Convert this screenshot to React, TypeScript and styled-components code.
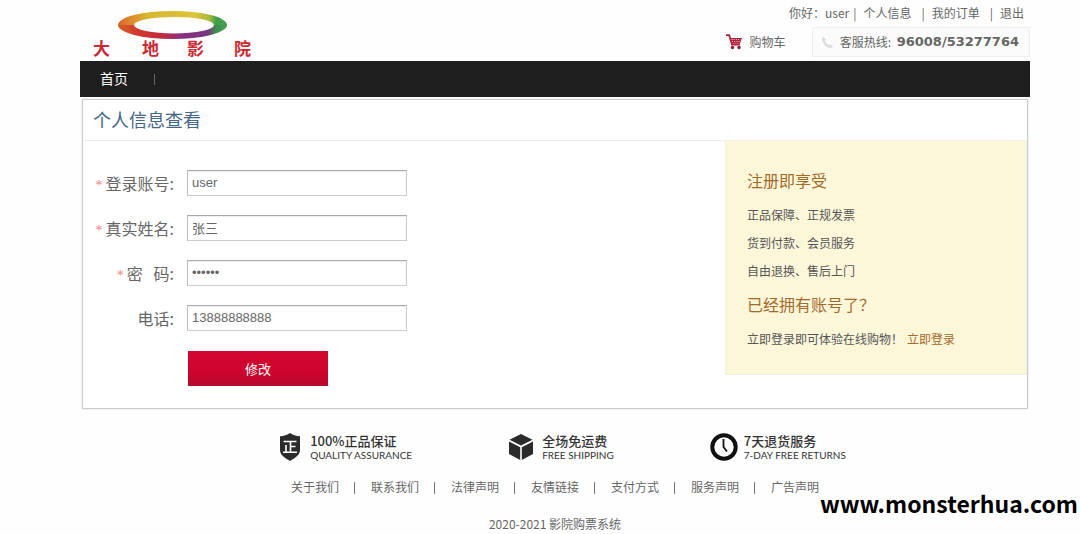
import React from "react";
import styled, { createGlobalStyle } from "styled-components";

const GlobalStyle = createGlobalStyle`
  * { box-sizing: border-box; }
  body {
    margin: 0;
    background: #fefefe;
    color: #666;
    font: 12px/20px "Noto Sans CJK SC", sans-serif;
  }
  a { color: inherit; text-decoration: none; }
  h2, p, ul { margin: 0; padding: 0; font-weight: 400; list-style: none; }
`;

const Page = styled.div`
  position: relative;
  padding: 0 50px 0 80px;
`;

const Header = styled.header`
  display: flex;
  justify-content: space-between;
  height: 61px;
`;

const HeaderSide = styled.div`
  display: flex;
  flex-direction: column;
  align-items: flex-end;
  gap: 4px;
  padding-top: 3px;
`;

const UserBar = styled.nav`
  display: flex;
  padding-right: 6px;
`;

const UserLink = styled.a`
  padding-right: 10px;
  &:last-child { padding-right: 0; }
`;

const UserName = styled.span`
  padding-right: 4px;
`;

const Bar = styled.span`
  padding-right: 7px;
`;

const Tools = styled.div`
  display: flex;
  align-items: center;
  gap: 26px;
`;

const CartLink = styled.a`
  display: flex;
  align-items: center;
  gap: 7px;
`;

const Hotline = styled.div`
  display: flex;
  align-items: center;
  height: 30px;
  padding: 0 10px 0 8px;
  border: 1px solid #eee;
  background: #fbfbfb;
  white-space: pre;

  svg { margin-right: 6px; }
  strong { margin-left: 3px; font: bold 13px/20px "DejaVu Sans", sans-serif; }
`;

const MainNav = styled.nav`
  display: flex;
  align-items: center;
  height: 36px;
  padding: 0 20px;
  background: #1e1e1e;
  color: #fff;
  font-size: 14px;
  line-height: 20px;

  a { padding-bottom: 2px; }
`;

const NavDivider = styled.span`
  width: 1px;
  height: 11px;
  margin-left: 26px;
  background: #666;
`;

const Panel = styled.main`
  margin: 2px 2px 0;
  border: 1px solid #ccc;
  box-shadow: 0 0 2px #ddd;
  background: #fff;
`;

const PanelTitle = styled.h2`
  height: 41px;
  padding-left: 10px;
  border-bottom: 1px solid #eee;
  color: #446688;
  font-size: 18px;
  line-height: 38px;
`;

const PanelBody = styled.div`
  display: flex;
  justify-content: space-between;
  align-items: flex-start;
`;

const Form = styled.form`
  display: grid;
  grid-template-columns: 102px 220px;
  row-gap: 19px;
  column-gap: 2px;
  padding: 29px 0 22px;
`;

const Label = styled.label`
  height: 26px;
  padding-right: 11px;
  font-size: 16px;
  line-height: 26px;
  text-align: right;
  white-space: pre;
`;

const Required = styled.span`
  margin-right: 3px;
  color: #f08080;
  font: 14px/20px "Liberation Serif", serif;
`;

const Field = styled.input`
  width: 220px;
  height: 26px;
  padding: 0 4px 2px;
  border: 1px solid #ccc;
  border-top-color: #aaa;
  border-left-color: #bbb;
  background: #fff;
  box-shadow: inset 0 1px 1px #eee;
  color: #666;
  font: 13px "Liberation Sans", "Noto Sans CJK SC", sans-serif;
`;

const Submit = styled.button`
  grid-column: 2;
  width: 140px;
  height: 35px;
  margin: 1px 0 0 1px;
  padding: 0;
  border: 0;
  background: linear-gradient(#d4062f, #cc052c 60%, #b50a2c);
  color: #fff;
  font: 13px "Noto Sans CJK SC", sans-serif;
`;

const Aside = styled.aside`
  width: 302px;
  padding: 19px 21px 21px;
  border: 1px solid #f2efdf;
  border-top: 0;
  background: #fdf7da;
  color: #555;
  line-height: 28px;

  a { margin-left: 4px; color: #a46a2a; }
`;

const AsideTitle = styled.h2`
  padding-bottom: 1px;
  color: #a46a2a;
  font-size: 16px;
  line-height: 40px;

  p + & {
    padding-bottom: 2px;
    line-height: 38px;
  }
`;

const Footer = styled.footer`
  text-align: center;
`;

const Services = styled.div`
  display: flex;
  justify-content: center;
  gap: 96px;
  padding: 22px 0 0 12px;
`;

const Service = styled.div`
  display: flex;
  align-items: center;
  gap: 6px;
  height: 32px;
  color: #333;
  text-align: left;
`;

const ServiceName = styled.p`
  font-size: 13px;
  line-height: 16px;
  font-weight: 500;
`;

const ServiceNote = styled.p`
  font: 10px/12px Lato, sans-serif;
`;

const FooterLinks = styled.ul`
  display: flex;
  justify-content: center;
  margin-top: 14px;

  li + li::before {
    content: "";
    display: inline-block;
    width: 1px;
    height: 12px;
    margin: 0 16px 0 15px;
    background: #777;
    vertical-align: -2px;
  }
`;

const Copyright = styled.p`
  margin-top: 17px;
`;

const Watermark = styled.div`
  position: absolute;
  right: 2px;
  bottom: 16px;
  color: #000;
  font: bold 23px/30px "Noto Sans CJK SC", sans-serif;
`;

const Logo = () => (
  <svg width="190" height="61" viewBox="0 0 190 61" role="img" aria-label="大地影院">
    <defs>
      <linearGradient id="upper" x1="38" x2="147" y1="0" y2="0" gradientUnits="userSpaceOnUse">
        <stop offset="0" stopColor="#d9642a" />
        <stop offset=".12" stopColor="#dc8a2c" />
        <stop offset=".26" stopColor="#d9b52f" />
        <stop offset=".7" stopColor="#dcc53a" />
        <stop offset=".84" stopColor="#a9b838" />
        <stop offset=".9" stopColor="#3fa04a" />
        <stop offset="1" stopColor="#45a050" />
      </linearGradient>
      <linearGradient id="lower" x1="38" x2="147" y1="0" y2="0" gradientUnits="userSpaceOnUse">
        <stop offset="0" stopColor="#d9642a" />
        <stop offset=".16" stopColor="#cf3a2c" />
        <stop offset=".4" stopColor="#c62a3c" />
        <stop offset=".58" stopColor="#8a2f80" />
        <stop offset=".82" stopColor="#7a3580" />
        <stop offset=".9" stopColor="#3f8f50" />
        <stop offset="1" stopColor="#45a050" />
      </linearGradient>
    </defs>
    <path d="M38 25A54.500 14 0 0 1 147 25H134A40 8 0 0 0 54 25Z" fill="url(#upper)" />
    <path d="M38 25A54.500 14 0 0 0 147 25H134A40 8.500 0 0 1 54 25Z" fill="url(#lower)" />
    <text
      x="13 62 107 154"
      y="55"
      fill="#cc2a33"
      fontFamily="Noto Sans CJK SC, sans-serif"
      fontSize="17"
      fontWeight="700"
    >
      大地影院
    </text>
  </svg>
);

const CartIcon = () => (
  <svg width="17" height="16" viewBox="0 0 17 16">
    <path d="M0 1.200H3.200L6 10.500H14" fill="none" stroke="#b3203a" strokeWidth="1.800" />
    <path d="M4 4H16L14 9.500H5.800Z" fill="#b3203a" />
    <path d="M5.500 5.500H14.500M6 7.500H14" stroke="#fff" strokeWidth=".8" strokeDasharray="1 1.200" />
    <circle cx="6.500" cy="13.500" r="1.700" fill="#8c1c30" />
    <circle cx="13" cy="13.500" r="1.700" fill="#8c1c30" />
  </svg>
);

const PhoneIcon = () => (
  <svg width="13" height="13" viewBox="0 0 13 13">
    <path
      d="M2.500 .8C.4 2 .8 5.500 3.500 8.800S10 13 12 10.800L9.800 8.500 8 9.300C6.300 8.600 4.600 6.500 4.100 4.600L5 3.200Z"
      fill="#dcdcdc"
    />
  </svg>
);

const ShieldIcon = () => (
  <svg width="28" height="28" viewBox="-3 0 28 28">
    <path d="M11 0C13.500 2 17 3.200 21 3.300V17C21 22 16 25 11 28 6 25 1 22 1 17V3.300C5 3.200 8.500 2 11 0Z" fill="#2b2b2b" />
    <path d="M4.500 8.500H17.500M11.500 8.500V19M11.500 13.500H16.500M7 12V19M4 19.300H18" fill="none" stroke="#fff" strokeWidth="1.600" />
  </svg>
);

const BoxIcon = () => (
  <svg width="28" height="28" viewBox="0 0 28 28">
    <path d="M13 1 24.500 6.800 13 12.600 1.500 6.800Z" fill="#2b2b2b" />
    <path d="M1 8.600 12.200 14.200V27L1 21Z" fill="#2b2b2b" />
    <path d="M25 8.600 13.800 14.200V27L25 21Z" fill="#2b2b2b" />
  </svg>
);

const ClockIcon = () => (
  <svg width="28" height="28" viewBox="0 0 28 28">
    <circle cx="14" cy="14" r="11.700" fill="#fff" stroke="#111" strokeWidth="4" />
    <path d="M13.500 6V14L17 18.500" fill="none" stroke="#111" strokeWidth="1.800" />
  </svg>
);

const fields = [
  { id: "account", label: "登录账号:", required: true, type: "text", value: "user" },
  { id: "name", label: "真实姓名:", required: true, type: "text", value: "张三" },
  { id: "password", label: "密\u00a0 \u00a0码:", required: true, type: "password", value: "123456" },
  { id: "phone", label: "电话:", required: false, type: "text", value: "13888888888" },
];

const services = [
  { icon: <ShieldIcon />, name: "100%正品保证", note: "QUALITY ASSURANCE" },
  { icon: <BoxIcon />, name: "全场免运费", note: "FREE SHIPPING" },
  { icon: <ClockIcon />, name: "7天退货服务", note: "7-DAY FREE RETURNS" },
];

const footerLinks = ["关于我们", "联系我们", "法律声明", "友情链接", "支付方式", "服务声明", "广告声明"];

export default function App() {
  return (
    <>
      <GlobalStyle />
      <Page>
        <Header>
          <Logo />
          <HeaderSide>
            <UserBar>
              <UserName>你好：user</UserName>
              <Bar>|</Bar>
              <UserLink href="#">个人信息</UserLink>
              <Bar>|</Bar>
              <UserLink href="#">我的订单</UserLink>
              <Bar>|</Bar>
              <UserLink href="#">退出</UserLink>
            </UserBar>
            <Tools>
              <CartLink href="#">
                <CartIcon />
                购物车
              </CartLink>
              <Hotline>
                <PhoneIcon />
                客服热线: <strong>96008/53277764</strong>
              </Hotline>
            </Tools>
          </HeaderSide>
        </Header>

        <MainNav>
          <a href="#">首页</a>
          <NavDivider />
        </MainNav>

        <Panel>
          <PanelTitle>个人信息查看</PanelTitle>
          <PanelBody>
            <Form onSubmit={(e) => e.preventDefault()}>
              {fields.map((f) => (
                <React.Fragment key={f.id}>
                  <Label htmlFor={f.id}>
                    {f.required && <Required>*</Required>}
                    {f.label}
                  </Label>
                  <Field id={f.id} type={f.type} defaultValue={f.value} />
                </React.Fragment>
              ))}
              <Submit type="submit">修改</Submit>
            </Form>
            <Aside>
              <AsideTitle>注册即享受</AsideTitle>
              <p>正品保障、正规发票</p>
              <p>货到付款、会员服务</p>
              <p>自由退换、售后上门</p>
              <AsideTitle>已经拥有账号了？</AsideTitle>
              <p>
                立即登录即可体验在线购物！<a href="#">立即登录</a>
              </p>
            </Aside>
          </PanelBody>
        </Panel>

        <Footer>
          <Services>
            {services.map((s) => (
              <Service key={s.name}>
                {s.icon}
                <div>
                  <ServiceName>{s.name}</ServiceName>
                  <ServiceNote>{s.note}</ServiceNote>
                </div>
              </Service>
            ))}
          </Services>
          <FooterLinks>
            {footerLinks.map((t) => (
              <li key={t}>
                <a href="#">{t}</a>
              </li>
            ))}
          </FooterLinks>
          <Copyright>2020-2021 影院购票系统</Copyright>
        </Footer>
        <Watermark>www.monsterhua.com</Watermark>
      </Page>
    </>
  );
}
